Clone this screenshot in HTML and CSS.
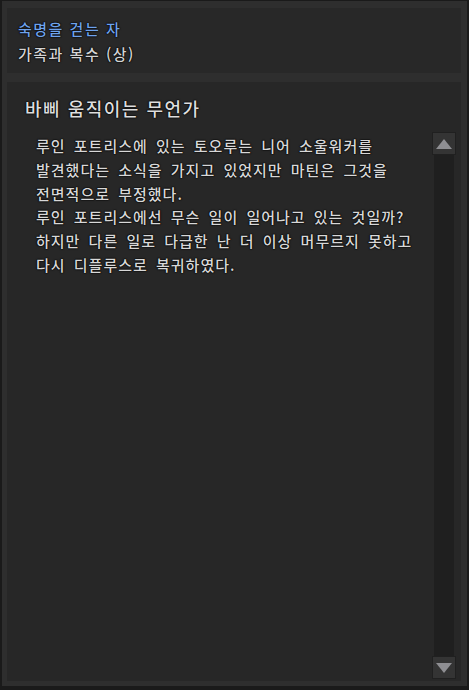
FILE: index.html
```html
<!DOCTYPE html>
<html lang="ko">
<head>
<meta charset="utf-8">
<link rel="stylesheet" href="styles.css">
</head>
<body>
<div class="frame">
  <section class="quest-head">
    <div class="quest-title">숙명을 걷는 자</div>
    <div class="quest-sub">가족과 복수 (상)</div>
  </section>
  <section class="quest-body">
    <h2 class="step-title">바삐 움직이는 무언가</h2>
    <div class="scroll-row">
      <div class="desc">
        <p>루인 포트리스에 있는 토오루는 니어 소울워커를<br>발견했다는 소식을 가지고 있었지만 마틴은 그것을<br>전면적으로 부정했다.<br>루인 포트리스에선 무슨 일이 일어나고 있는 것일까?<br>하지만 다른 일로 다급한 난 더 이상 머무르지 못하고<br>다시 디플루스로 복귀하였다.</p>
      </div>
      <div class="scrollbar">
        <div class="sb-btn">
          <svg width="16" height="10" viewBox="0 0 16 10"><polygon points="8,0 16,10 0,10" fill="#8e8e92"/></svg>
        </div>
        <div class="sb-track"></div>
        <div class="sb-btn">
          <svg width="16" height="10" viewBox="0 0 16 10"><polygon points="0,0 16,0 8,10" fill="#8e8e92"/></svg>
        </div>
      </div>
    </div>
  </section>
</div>
</body>
</html>
```

FILE: styles.css
```css
html, body {
  margin: 0;
  padding: 0;
  background: #1a1a1a;
  width: 469px;
  height: 690px;
  overflow: hidden;
}
body {
  font-family: "Noto Sans CJK KR", "Noto Sans", sans-serif;
  color: #d6d6d6;
}
.frame {
  margin: 1px 2px 0 2px;
  height: 685px;
  box-sizing: border-box;
  background: #2e2e2e;
  padding: 7px 6px 5px 5px;
  display: flex;
  flex-direction: column;
  gap: 9px;
}
.quest-head {
  height: 65px;
  background: #282828;
  padding: 11px 0 0 11px;
  box-sizing: border-box;
  text-shadow: 0 0 2px #000, 0 0 1px #000, 0 0 1px #000;
}
.quest-title {
  color: #6fa3ec;
  font-size: 15px;
  font-weight: 500;
  line-height: 20px;
  height: 20px;
  letter-spacing: 1.5px;
}
.quest-sub {
  color: #d4d4d4;
  font-size: 15px;
  font-weight: 500;
  line-height: 20px;
  margin-top: 5px;
  letter-spacing: 1.5px;
}
.quest-body {
  flex: 1;
  background: #272727;
  display: flex;
  flex-direction: column;
  min-height: 0;
}
.step-title {
  margin: 14px 0 12px 18px;
  font-size: 18px;
  line-height: 24px;
  font-weight: 500;
  letter-spacing: 1.5px;
  color: #dedede;
  text-shadow: 0 0 2px #000, 0 0 1px #000, 0 0 1px #000;
}
.scroll-row {
  flex: 1;
  display: flex;
  min-height: 0;
  padding: 0 5px 2px 0;
}
.desc {
  flex: 1;
  padding: 2px 0 0 29px;
}
.desc p {
  margin: 0;
  font-size: 15px;
  font-weight: 500;
  line-height: 23.8px;
  letter-spacing: 1px;
  word-spacing: 3px;
  color: #d8d8d8;
  text-shadow: 0 0 2px #000, 0 0 1px #000, 0 0 1px #000;
}
.scrollbar {
  width: 24px;
  display: flex;
  flex-direction: column;
}
.sb-btn {
  height: 23px;
  box-sizing: border-box;
  background: #343434;
  border: 1px solid #202020;
  display: flex;
  align-items: center;
  justify-content: center;
}
.sb-track {
  flex: 1;
  margin: 0 2px;
  background: #1f1f1f;
}
```
